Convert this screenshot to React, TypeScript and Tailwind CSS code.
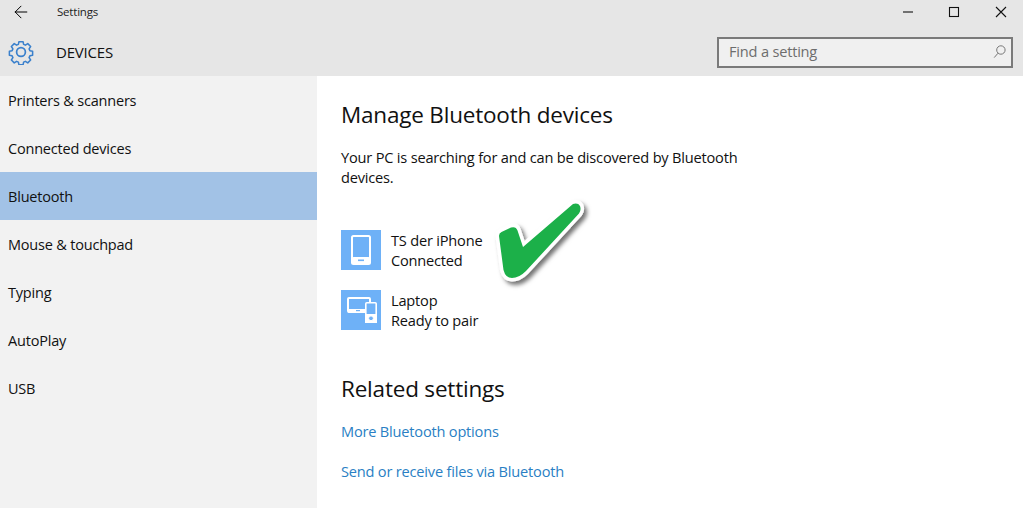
import { ArrowLeft } from "lucide-react";

const navItems = ["Printers & scanners", "Connected devices", "Bluetooth", "Mouse & touchpad", "Typing", "AutoPlay", "USB"];

function GearIcon() {
  return (
    <svg width="26" height="26" viewBox="0 0 26 26" fill="none" stroke="#3a80cc" strokeWidth="1.7" strokeLinejoin="round">
      <path d="M10.7 1.5h4.6l.6 3 2 .9 2.6-1.7 3.2 3.2-1.7 2.6.9 2 3 .6v4.6l-3 .6-.9 2 1.7 2.6-3.2 3.2-2.6-1.7-2 .9-.6 3h-4.6l-.6-3-2-.9-2.6 1.7-3.2-3.2 1.7-2.6-.9-2-3-.6v-4.6l3-.6.9-2-1.7-2.6 3.2-3.2 2.6 1.7 2-.9z" transform="translate(1.3 1.3) scale(0.9)" />
      <circle cx="13" cy="13" r="4.4" />
    </svg>
  );
}

function SearchGlass() {
  return (
    <svg width="14" height="14" viewBox="0 0 14 14" fill="none" stroke="#777" strokeWidth="1">
      <circle cx="7.9" cy="5" r="4.2" />
      <path d="M5 8.2L1.2 12.6" />
    </svg>
  );
}

function WindowButtons() {
  return (
    <svg width="104" height="14" viewBox="0 0 104 14" fill="none" stroke="#111" strokeWidth="1.1" className="ml-auto mr-[16px]">
      <path d="M0 7h10" />
      <rect x="46.5" y="2.5" width="9" height="9" />
      <path d="M93 2l10 10M103 2L93 12" />
    </svg>
  );
}

function PhoneIcon() {
  return (
    <svg width="40" height="40" viewBox="0 0 40 40">
      <rect width="40" height="40" fill="#6eb1f7" />
      <rect x="11" y="6" width="18" height="28" rx="1.5" fill="none" stroke="#fff" strokeWidth="2" />
      <rect x="11" y="27" width="18" height="7" rx="1.5" fill="#fff" />
      <rect x="17" y="29.5" width="6" height="1.6" fill="#6eb1f7" />
    </svg>
  );
}

function LaptopIcon() {
  return (
    <svg width="40" height="40" viewBox="0 0 40 40">
      <rect width="40" height="40" fill="#6eb1f7" />
      <rect x="7" y="8" width="22" height="14" rx="1" fill="none" stroke="#fff" strokeWidth="2" />
      <rect x="7" y="19" width="22" height="3.5" fill="#fff" />
      <rect x="15" y="20" width="4" height="1.2" fill="#6eb1f7" />
      <rect x="24.8" y="12.8" width="10.4" height="19.4" rx="1" fill="#6eb1f7" stroke="#fff" strokeWidth="1.6" />
      <rect x="24" y="24" width="12" height="9" fill="#fff" />
      <circle cx="30" cy="28.3" r="2.4" fill="#6eb1f7" stroke="#fff" strokeWidth="1" />
    </svg>
  );
}

function Device({ icon, name, status }: { icon: React.ReactNode; name: string; status: string }) {
  return (
    <div className="flex items-center gap-[10px] h-[40px]">
      {icon}
      <div className="text-[14.6px] leading-[20px] text-[#111]">
        <div>{name}</div>
        <div>{status}</div>
      </div>
    </div>
  );
}

export default function App() {
  return (
    <div className="relative w-[1023px] h-[508px] overflow-hidden bg-white font-['Open_Sans','Noto_Sans',sans-serif] tracking-[-0.2px]">
      {/* Title bar and header */}
      <header className="h-[76px] bg-[#e6e6e6] flex flex-col">
        <div className="h-[24px] flex items-center">
          <ArrowLeft size={20} strokeWidth={1.2} className="ml-[11px] text-black" />
          <span className="ml-[26px] text-[11.5px] text-[#222]">Settings</span>
          <WindowButtons />
        </div>
        <div className="flex items-center h-[34px] mt-[11px]">
          <div className="ml-[8px]"><GearIcon /></div>
          <span className="ml-[22px] text-[15px] font-medium text-[#111]">DEVICES</span>
          <div className="ml-auto mr-[10px] w-[296px] h-[31px] border-2 border-[#7a7a7a] bg-[#f0f0f0] flex items-center pl-[10px] pr-[4px]">
            <span className="text-[14.6px] text-[#6d6d6d]">Find a setting</span>
            <div className="ml-auto"><SearchGlass /></div>
          </div>
        </div>
      </header>

      <div className="flex h-[432px]">
        {/* Sidebar */}
        <nav className="w-[317px] bg-[#f2f2f2]">
          {navItems.map((item) => (
            <div
              key={item}
              className={`h-[48px] pl-[8px] pt-[2px] flex items-center text-[14.5px] text-[#111] ${item === "Bluetooth" ? "bg-[#a2c2e6]" : ""}`}
            >
              {item}
            </div>
          ))}
        </nav>

        {/* Main */}
        <main className="flex-1 pl-[24px] pt-[22px]">
          <h1 className="text-[22.5px] leading-[34px] text-[#111]">Manage Bluetooth devices</h1>
          <p className="mt-[15px] w-[420px] text-[14.6px] leading-[20px] text-[#111]">
            Your PC is searching for and can be discovered by Bluetooth devices.
          </p>
          <div className="mt-[43px] flex flex-col gap-[20px]">
            <Device icon={<PhoneIcon />} name="TS der iPhone" status="Connected" />
            <Device icon={<LaptopIcon />} name="Laptop" status="Ready to pair" />
          </div>
          <h2 className="mt-[42px] text-[22.5px] leading-[34px] text-[#111]">Related settings</h2>
          <div className="mt-[15px] text-[14.6px] leading-[20px] text-[#2a7fc4]">More Bluetooth options</div>
          <div className="mt-[20px] text-[14.6px] leading-[20px] text-[#2a7fc4]">Send or receive files via Bluetooth</div>
        </main>
      </div>

      {/* Green check mark pasted over the screenshot */}
      <svg className="absolute left-[490px] top-[195px]" width="110" height="100" viewBox="0 0 110 100">
        <defs>
          <filter id="checkShadow" x="-20%" y="-20%" width="140%" height="140%">
            <feDropShadow dx="3" dy="3.5" stdDeviation="2" floodColor="#000" floodOpacity="0.55" />
          </filter>
        </defs>
        <path
          d="M9 41 Q9 38 11.5 37 L21 32.5 Q26 31 27.5 35.5 L33 52 L83 9 Q88 7.5 90 11 Q91.5 15 89 18.5 L36 76 Q29 83 22 83 Q15.5 83 13.5 75 Z"
          fill="#1bb04a"
          stroke="#fff"
          strokeWidth="7"
          strokeLinejoin="round"
          paintOrder="stroke"
          filter="url(#checkShadow)"
        />
      </svg>
    </div>
  );
}
